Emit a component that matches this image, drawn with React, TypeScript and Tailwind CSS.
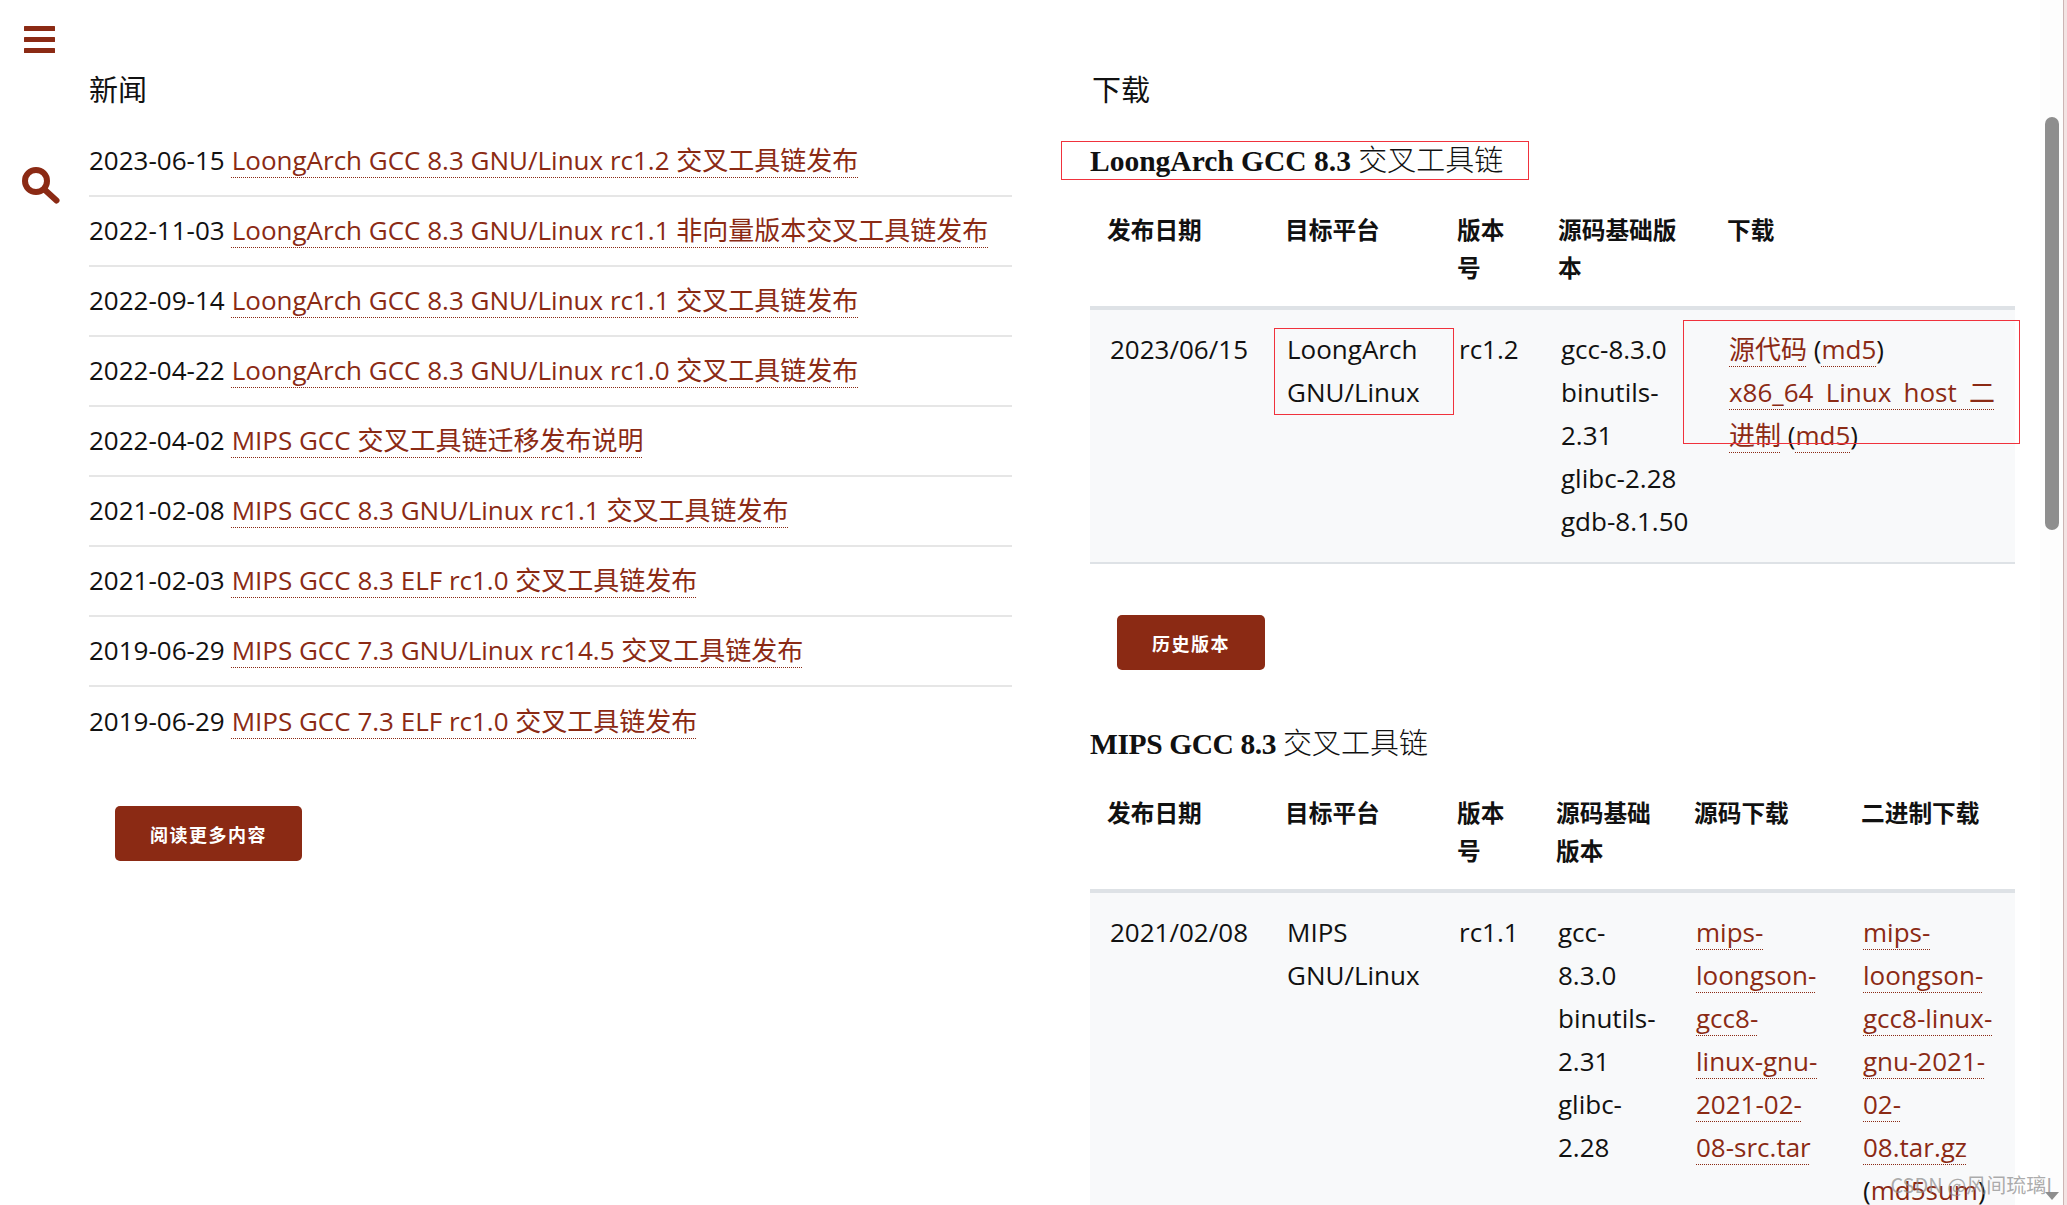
import React from "react";

const cjk = "font-['Open_Sans','Noto_Sans_CJK_SC',sans-serif]";

const news = [
  ["2023-06-15", "LoongArch GCC 8.3 GNU/Linux rc1.2 交叉工具链发布"],
  ["2022-11-03", "LoongArch GCC 8.3 GNU/Linux rc1.1 非向量版本交叉工具链发布"],
  ["2022-09-14", "LoongArch GCC 8.3 GNU/Linux rc1.1 交叉工具链发布"],
  ["2022-04-22", "LoongArch GCC 8.3 GNU/Linux rc1.0 交叉工具链发布"],
  ["2022-04-02", "MIPS GCC 交叉工具链迁移发布说明"],
  ["2021-02-08", "MIPS GCC 8.3 GNU/Linux rc1.1 交叉工具链发布"],
  ["2021-02-03", "MIPS GCC 8.3 ELF rc1.0 交叉工具链发布"],
  ["2019-06-29", "MIPS GCC 7.3 GNU/Linux rc14.5 交叉工具链发布"],
  ["2019-06-29", "MIPS GCC 7.3 ELF rc1.0 交叉工具链发布"],
];

function A({ children }: { children: React.ReactNode }) {
  return (
    <a className="text-[#8b2a14] underline decoration-dotted decoration-[1px] underline-offset-[7px] [text-decoration-skip-ink:none]">
      {children}
    </a>
  );
}

function Th({ children, w }: { children: React.ReactNode; w: string }) {
  return (
    <th className={`${w} pl-[17px] pr-[14px] pt-[10px] pb-[19px] text-left align-top font-bold text-[23.7px] leading-[38px] font-['Open_Sans','Noto_Sans_CJK_SC',sans-serif]`}>
      {children}
    </th>
  );
}

function Td({ children, className = "" }: { children: React.ReactNode; className?: string }) {
  return <td className={`pl-[19px] pr-[4px] pt-[18px] pb-[19px] align-top ${className}`}>{children}</td>;
}

function Heading({ children, className = "" }: { children: React.ReactNode; className?: string }) {
  return (
    <h3 className={`text-[29.5px] leading-[40px] text-[#111] font-['Liberation_Serif','Noto_Sans_CJK_SC',serif] font-bold ${className}`}>
      {children}
    </h3>
  );
}

function CnLight({ children }: { children: React.ReactNode }) {
  return <span className="font-light text-[29px] tracking-normal font-['Noto_Sans_CJK_SC',serif]">{children}</span>;
}

export default function App() {
  return (
    <div className={`h-[1205px] w-full overflow-hidden flex bg-white text-[26px] leading-[43px] text-[#111] ${cjk}`}>
      <aside className="w-[89px] shrink-0 flex flex-col pl-[20px]">
        <svg className="mt-[26px] ml-[4px]" width="31" height="27" viewBox="0 0 31 27">
          <rect x="0" y="0" width="31" height="5" rx="0.5" fill="#8b2a14" />
          <rect x="0" y="11" width="31" height="5" rx="0.5" fill="#8b2a14" />
          <rect x="0" y="22" width="31" height="5" rx="0.5" fill="#8b2a14" />
        </svg>
        <svg className="mt-[114px] ml-[2px]" width="38" height="37" viewBox="0 0 38 37">
          <circle cx="14" cy="14" r="11" fill="none" stroke="#8b2a14" strokeWidth="6" />
          <path d="M23 23 L34.5 33.5" stroke="#8b2a14" strokeWidth="6" strokeLinecap="round" />
        </svg>
      </aside>

      <main className="flex-1 min-w-0 flex gap-[78px] pr-[25px]">
        <section className="w-[923px] shrink-0">
          <h2 className="mt-[66px] mb-[17px] text-[29px] leading-[44px] font-normal font-['Noto_Sans_CJK_SC',serif]">新闻</h2>
          <ul>
            {news.map(([date, title], i) => (
              <li key={i} className="h-[70px] pb-[2px] flex items-center gap-[7px] border-b-2 border-[#e6e6e6] last:border-b-0">
                <span>{date}</span>
                <A>{title}</A>
              </li>
            ))}
          </ul>
          <button className="mt-[49px] ml-[26px] block w-[187px] h-[55px] rounded-[5px] bg-[#8b2a14] text-white text-[18px] tracking-[1.5px] font-bold leading-none font-['Noto_Sans_CJK_SC',serif]">
            阅读更多内容
          </button>
        </section>

        <section className="w-[925px] shrink-0">
          <h2 className="mt-[66px] mb-[28px] ml-[2px] text-[29px] leading-[44px] font-normal font-['Noto_Sans_CJK_SC',serif]">下载</h2>
          <div className="relative">
            <Heading>LoongArch GCC 8.3 <CnLight>交叉工具链</CnLight></Heading>
            <div className="absolute left-[-29px] top-[3px] w-[468px] h-[39px] border border-[#f0323c]" />
          </div>

          <table className="mt-[20px] w-full table-fixed border-collapse">
            <thead>
              <tr className="border-b-4 border-[#dee2e6]">
                <Th w="w-[178px]">发布日期</Th>
                <Th w="w-[172px]">目标平台</Th>
                <Th w="w-[101px]">版本号</Th>
                <Th w="w-[169px]">源码基础版本</Th>
                <Th w="w-[305px]">下载</Th>
              </tr>
            </thead>
            <tbody>
              <tr className="bg-[#f8f9fa] border-b-2 border-[#dee2e6]">
                <Td className="!pl-[20px]">2023/06/15</Td>
                <Td className="relative">
                  LoongArch GNU/Linux
                  <div className="absolute left-[6px] top-[18px] w-[180px] h-[87px] border border-[#f0323c]" />
                </Td>
                <Td>rc1.2</Td>
                <Td className="!pl-[20px]">gcc-8.3.0<br />binutils-2.31<br />glibc-2.28<br />gdb-8.1.50</Td>
                <Td className="relative text-justify !pr-[20px]">
                  <A>源代码</A> (<A>md5</A>)
                  <br />
                  <A>x86_64 Linux host 二进制</A> (<A>md5</A>)
                  <div className="absolute left-[-27px] top-[10px] w-[337px] h-[124px] border border-[#f0323c]" />
                </Td>
              </tr>
            </tbody>
          </table>

          <button className="mt-[51px] ml-[27px] block w-[148px] h-[55px] rounded-[5px] bg-[#8b2a14] text-white text-[18px] tracking-[1.5px] font-bold leading-none font-['Noto_Sans_CJK_SC',serif]">
            历史版本
          </button>

          <div className="mt-[51px]">
            <Heading className="tracking-[-0.4px]">MIPS GCC 8.3 <CnLight>交叉工具链</CnLight></Heading>
          </div>

          <table className="mt-[20px] w-full table-fixed border-collapse">
            <thead>
              <tr className="border-b-4 border-[#dee2e6]">
                <Th w="w-[178px]">发布日期</Th>
                <Th w="w-[172px]">目标平台</Th>
                <Th w="w-[99px]">版本号</Th>
                <Th w="w-[138px]">源码基础版本</Th>
                <Th w="w-[167px]">源码下载</Th>
                <Th w="w-[171px]">二进制下载</Th>
              </tr>
            </thead>
            <tbody>
              <tr className="bg-[#f8f9fa]">
                <Td className="!pl-[20px]">2021/02/08</Td>
                <Td>MIPS GNU/Linux</Td>
                <Td>rc1.1</Td>
                <Td className="!pr-[17px]">gcc-8.3.0<br />binutils-2.31<br />glibc-2.28</Td>
                <Td className="!pr-[23px]"><A>mips-loongson-gcc8-linux-gnu-2021-02-08-src.tar</A></Td>
                <Td className="!pr-[17px]"><A>mips-loongson-gcc8-linux-gnu-2021-02-08.tar.gz</A><br />(<A>md5sum</A>)</Td>
              </tr>
            </tbody>
          </table>
        </section>
      </main>

      <div className="relative w-[27px] shrink-0 flex">
        <div className="w-[23px] bg-[#fdfdfd]">
          <div className="mt-[117px] ml-[5px] w-[14px] h-[413px] rounded-full bg-[#8e8e8e]" />
        </div>
        <div className="w-[1px] bg-[#cdb4b4]" />
        <div className="flex-1 bg-[#f3e3e3]" />
        <div className="absolute bottom-[5px] left-[5px] w-0 h-0 border-l-[7px] border-r-[7px] border-t-[8px] border-l-transparent border-r-transparent border-t-[#8e8e8e]" />
        <div className="absolute right-[15px] bottom-[6px] whitespace-nowrap text-[20px] leading-[28px] text-[#888]/70 font-['Noto_Sans_CJK_SC',sans-serif]">
          CSDN @风间琉璃I
        </div>
      </div>
    </div>
  );
}
